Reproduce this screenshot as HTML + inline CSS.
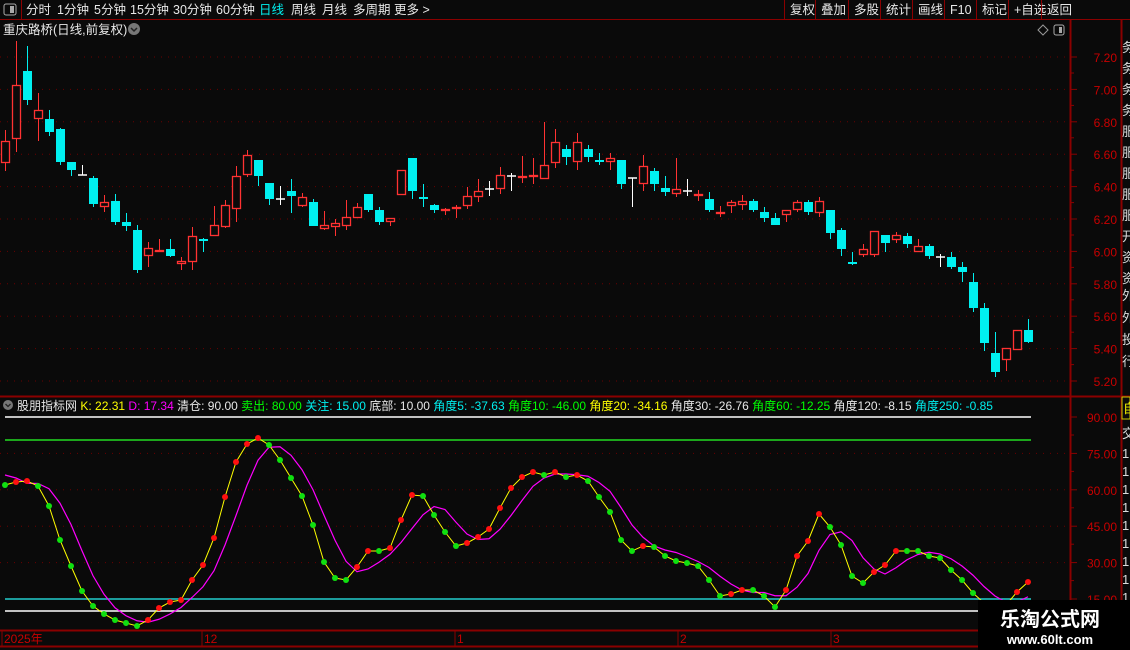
<!DOCTYPE html>
<html><head><meta charset="utf-8">
<style>
html,body{margin:0;padding:0;background:#0a0a0a;width:1130px;height:650px;overflow:hidden;font-family:"Liberation Sans","Noto Sans CJK SC",sans-serif;}
svg{position:absolute;left:0;top:0}
text{font-family:"Liberation Sans","Noto Sans CJK SC",sans-serif}
</style></head><body>
<svg id="s" width="1130" height="650" xmlns="http://www.w3.org/2000/svg"></svg>
<script>
const s=document.getElementById('s');let h='';
const R='#ff3232',C='#00f0f0',W='#ffffff',AX='#8b0000';
h+=`<rect x="0" y="0" width="1130" height="19" fill="#0a0a0a"/>`;
h+=`<line x1="0" y1="19.5" x2="1130" y2="19.5" stroke="${AX}"/>`;
h+=`<line x1="21.5" y1="0" x2="21.5" y2="19" stroke="${AX}"/>`;
h+=`<rect x="4" y="4" width="12" height="11" rx="2" fill="none" stroke="#aaa"/><rect x="10" y="6" width="4" height="7" fill="#aaa"/>`;
const tabs=[['分时',26],['1分钟',57],['5分钟',94],['15分钟',130],['30分钟',173],['60分钟',216],['日线',259],['周线',291],['月线',322],['多周期',353],['更多 >',394]];
tabs.forEach(t=>h+=`<text x="${t[1]}" y="14" font-size="12.5" fill="${t[0]=='日线'?C:'#e8e8e8'}">${t[0]}</text>`);
const btn=[['复权',785],['叠加',816],['多股',849],['统计',881],['画线',913],['F10',945],['标记',977],['+自选',1009],['返回',1042]];
btn.forEach((b,i)=>{h+=`<line x1="${b[1]-0.5}" y1="0" x2="${b[1]-0.5}" y2="19" stroke="${AX}"/>`;h+=`<text x="${b[1]+5}" y="14" font-size="12.5" fill="#e8e8e8">${b[0]}</text>`});
h+=`<text x="3" y="34" font-size="12.5" fill="#e8e8e8">重庆路桥(日线,前复权)</text>`;
h+=`<circle cx="134" cy="29" r="6" fill="#777"/><path d="M131 28l3 3 3-3" stroke="#222" fill="none" stroke-width="1.5"/>`;
h+=`<path d="M1043 25l5 5-5 5-5-5z" fill="none" stroke="#999"/><rect x="1054" y="25" width="10" height="10" rx="2" fill="none" stroke="#aaa"/><rect x="1059" y="27" width="3" height="6" fill="#aaa"/>`;
h+=`<line x1="1070.5" y1="19" x2="1070.5" y2="630" stroke="${AX}" stroke-width="2"/>`;
h+=`<line x1="1121.5" y1="19" x2="1121.5" y2="650" stroke="${AX}" stroke-width="2"/>`;
h+=`<line x1="0" y1="396.5" x2="1130" y2="396.5" stroke="${AX}" stroke-width="2"/>`;
h+=`<line x1="0" y1="630.5" x2="1130" y2="630.5" stroke="${AX}" stroke-width="2"/>`;
h+=`<line x1="0" y1="646.5" x2="1130" y2="646.5" stroke="${AX}" stroke-width="2"/>`;
const pl=['7.20','7.00','6.80','6.60','6.40','6.20','6.00','5.80','5.60','5.40','5.20'];
pl.forEach((p,i)=>{const y=57+i*32.4;h+=`<line x1="0" y1="${y}" x2="1068" y2="${y}" stroke="#6a0000" stroke-dasharray="1 6"/>`;
h+=`<line x1="1071" y1="${y}" x2="1077" y2="${y}" stroke="${AX}"/><line x1="1071" y1="${y+16}" x2="1074" y2="${y+16}" stroke="${AX}"/>`;
h+=`<text x="1117" y="${y+5}" font-size="12" fill="#c80000" text-anchor="end">${p}</text>`});
for(let i=0;i<12;i++)h+=`<text x="1122" y="${52+i*21}" font-size="13" fill="#ddd">${'务务务务服服服服服开资资'[i]}</text>`;
for(let i=0;i<4;i++)h+=`<text x="1122" y="${300+i*22}" font-size="13" fill="#ddd">${'外外投行'[i]}</text>`;
const cd=[
['r',141,163,130,171],['r',85,139,41,152],['c',71,100,46,105],['r',110,119,93,141],['c',119,132,110,136],['c',129,162,128,165],['c',162,170,162,176],['w',175,175,165,175],['c',178,204,176,207],['r',202,207,195,212],
['c',201,222,194,225],['c',222,226,213,231],['c',230,270,225,273],['r',248,256,242,267],['r',250,252,239,252],['c',249,256,239,257],['r',261,264,257,270],['r',236,262,227,270],['c',239,241,238,252],['r',225,236,206,236],
['r',205,227,200,228],['r',176,209,166,222],['r',155,175,150,177],['c',160,176,160,186],['c',183,199,183,205],['w',199,199,186,205],['c',191,196,179,213],['r',197,206,193,207],['c',202,226,199,226],['r',225,229,211,230],
['r',223,227,219,236],['r',217,226,200,230],['r',207,218,203,218],['c',194,210,194,212],['c',210,222,207,225],['r',218,222,218,226],['r',170,195,170,195],['c',158,191,158,199],['c',197,199,184,207],['c',205,210,204,213],
['r',209,210,208,215],['r',207,209,205,218],['r',196,206,187,209],['r',191,197,179,202],['w',189,189,181,196],['r',175,189,167,194],['w',176,176,173,191],['r',176,178,156,183],['r',175,177,158,184],['r',165,179,122,179],
['r',142,163,129,168],['c',149,157,145,165],['r',142,162,133,170],['c',149,157,145,162],['c',160,162,153,165],['r',158,162,153,170],['c',160,184,160,189],['w',178,178,178,207],['r',166,184,155,191],['c',171,184,168,191],
['c',188,192,176,196],['r',189,194,158,197],['w',191,191,179,196],['r',194,196,190,201],['c',199,210,192,212],['r',212,213,206,217],['r',202,206,200,213],['r',201,205,195,210],['c',201,210,199,212],['c',212,218,207,222],
['c',218,225,213,225],['r',210,215,210,222],['r',202,210,200,212],['c',202,212,200,215],['r',201,213,197,217],['c',210,233,210,239],['c',230,249,228,256],['c',262,263,252,265],['r',249,255,244,257],['r',231,255,231,257],
['c',235,243,235,252],['r',235,240,232,243],['c',236,244,233,248],['r',246,252,239,252],['c',246,256,244,259],['w',257,257,254,267],['c',257,267,252,269],['c',267,272,262,282],['c',282,308,273,312],['c',308,343,303,351],
['c',353,372,332,377],['r',348,360,348,371],['r',330,350,330,350],['c',330,342,319,343]];
cd.forEach((c,i)=>{const x=5.5+11*i;const col=c[0]=='r'?R:c[0]=='c'?C:W;
h+=`<line x1="${x}" y1="${c[3]}" x2="${x}" y2="${c[4]}" stroke="${col}"/>`;
let bh=Math.max(c[2]-c[1],1);
if(c[0]=='r'){h+=`<rect x="${x-4}" y="${c[1]+0.5}" width="8" height="${Math.max(bh-1,1)}" fill="#0a0a0a" stroke="${col}" stroke-width="1.3"/>`;}
else if(c[0]=='c'){h+=`<rect x="${x-4.5}" y="${c[1]}" width="9" height="${Math.max(bh,2)}" fill="${col}"/>`;}
else h+=`<line x1="${x-4.5}" y1="${c[1]}" x2="${x+4.5}" y2="${c[1]}" stroke="${col}" stroke-width="1.5"/>`;});
h+=`<circle cx="8" cy="405" r="5" fill="#777"/><path d="M5.5 404l2.5 2.5 2.5-2.5" stroke="#222" fill="none" stroke-width="1.3"/>`;
const seg=[['股朋指标网','#e8e8e8'],[' K: 22.31','#ffff00'],[' D: 17.34','#ff00ff'],[' 清仓: 90.00','#e8e8e8'],[' 卖出: 80.00','#00ff00'],[' 关注: 15.00','#00f0f0'],[' 底部: 10.00','#e8e8e8'],[' 角度5: -37.63','#00f0f0'],[' 角度10: -46.00','#00ff00'],[' 角度20: -34.16','#ffff00'],[' 角度30: -26.76','#e8e8e8'],[' 角度60: -12.25','#00ff00'],[' 角度120: -8.15','#e8e8e8'],[' 角度250: -0.85','#00f0f0']];
h+=`<text x="17" y="410" font-size="12" xml:space="preserve">`+seg.map(t=>`<tspan fill="${t[1]}">${t[0]}</tspan>`).join('')+`</text>`;
const ol=['90.00','75.00','60.00','45.00','30.00','15.00'];
ol.forEach((p,i)=>{const y=417+i*36.4;if(i>0&&i<5)h+=`<line x1="0" y1="${y}" x2="1068" y2="${y}" stroke="#6a0000" stroke-dasharray="1 6"/>`;
h+=`<line x1="1071" y1="${y}" x2="1077" y2="${y}" stroke="${AX}"/><line x1="1071" y1="${y+18}" x2="1074" y2="${y+18}" stroke="${AX}"/>`;
h+=`<text x="1117" y="${y+5}" font-size="12" fill="#c80000" text-anchor="end">${p}</text>`});
h+=`<line x1="5" y1="417" x2="1031" y2="417" stroke="#fff" stroke-width="1.5"/>`;
h+=`<line x1="5" y1="440" x2="1031" y2="440" stroke="#22dd22" stroke-width="1.5"/>`;
h+=`<line x1="5" y1="599" x2="1031" y2="599" stroke="#22cccc" stroke-width="1.5"/>`;
h+=`<line x1="5" y1="611" x2="1031" y2="611" stroke="#fff" stroke-width="1.5"/>`;
h+=`<rect x="1122" y="397" width="8" height="22" fill="none" stroke="#cc0"/><text x="1123" y="413" font-size="13" fill="#ee0">自</text>`;
for(let i=0;i<9;i++)h+=`<text x="1122" y="${458+i*18}" font-size="13" fill="#ddd">1</text>`;
h+=`<text x="1122" y="438" font-size="13" fill="#ddd">交</text>`;
const K=[485,482,481,486,506,540,566,591,606,614,620,623,626,620,608,602,600,580,565,538,497,462,444,438,445,460,478,496,525,562,578,580,567,551,551,548,520,495,496,515,532,546,543,537,529,508,488,477,472,475,472,477,475,481,497,512,540,551,546,547,556,561,563,566,580,596,594,590,590,596,607,590,556,541,514,527,545,576,583,572,565,551,551,551,556,558,570,580,593,603,608,605,592,582];
const D=[];for(let i=0;i<K.length;i++){let a=K[Math.max(0,i-1)],b=K[Math.max(0,i-2)],c=K[Math.max(0,i-3)];D.push((K[i]+a+b+c)/4);}
D[0]=475;D[1]=478;
let pd='M'+D.map((y,i)=>`${5+11*i},${y}`).join(' L');
h+=`<path d="${pd}" fill="none" stroke="#ff00ff" stroke-width="1.2"/>`;
let pk='M'+K.map((y,i)=>`${5+11*i},${y}`).join(' L');
h+=`<path d="${pk}" fill="none" stroke="#ffff00" stroke-width="1"/>`;
K.forEach((y,i)=>{const up=i>0&&y<K[i-1];h+=`<circle cx="${5+11*i}" cy="${y}" r="3" fill="${up?'#ff1010':'#10e010'}"/>`});
[['2025年',4],['12',204],['1',457],['2',680],['3',833]].forEach(t=>{h+=`<line x1="${t[1]-2}" y1="631" x2="${t[1]-2}" y2="646" stroke="${AX}"/><text x="${t[1]}" y="643" font-size="12" fill="#c80000">${t[0]}</text>`});
h+=`<rect x="978" y="600" width="152" height="50" fill="#000"/>`;
h+=`<text x="1050" y="626" font-size="20" font-weight="bold" fill="#fff" text-anchor="middle" font-family="Noto Sans CJK SC,sans-serif">乐淘公式网</text>`;
h+=`<text x="1050" y="644" font-size="13" font-weight="bold" fill="#fff" text-anchor="middle" font-family="Liberation Serif,serif">www.60lt.com</text>`;
s.innerHTML=h;
</script>
</body></html>
